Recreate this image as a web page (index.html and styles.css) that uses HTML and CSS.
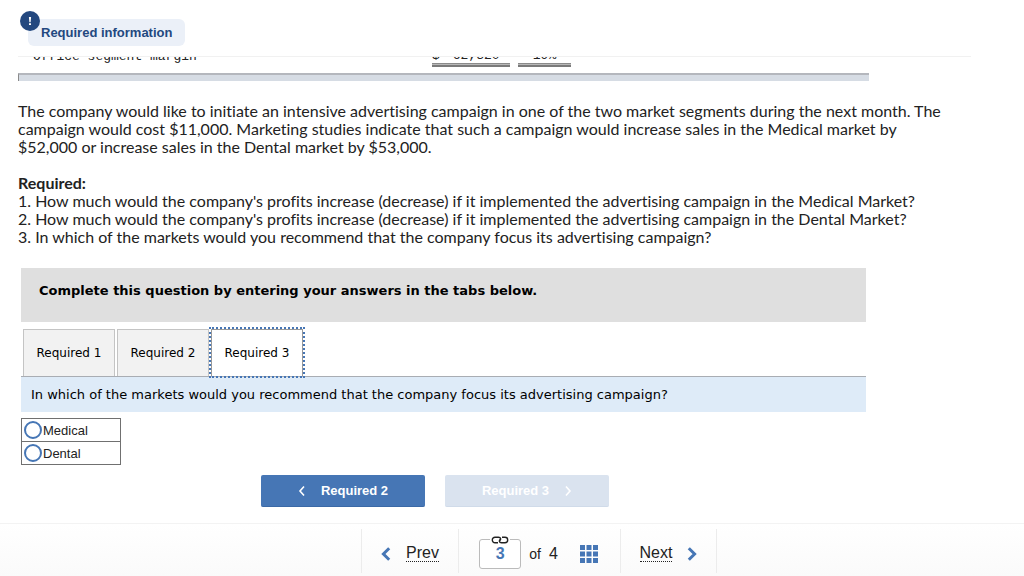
FILE: index.html
```
<!DOCTYPE html>
<html lang="en">
<head>
    <meta charset="UTF-8">
    <meta name="viewport" content="width=device-width, initial-scale=1.0">
    <title>Required information</title>
    <link rel="stylesheet" href="styles.css">
</head>
<body>

    <header class="info-header">
        <h1 class="info-tag">
            Required information
            <span class="info-badge">
                <svg width="20" height="20" viewBox="0 0 20 20" aria-hidden="true">
                    <circle cx="10" cy="10" r="10" fill="#23487f"/>
                    <path d="M8.9 6h2.2l-.5 5.2H9.4zM9 12.2h2v1.8H9z" fill="#fff"/>
                </svg>
            </span>
        </h1>
    </header>

    <main class="content">
        <div class="segment-wrap">
            <table class="segment-table">
                <tr>
                    <td class="segment-name">Office segment margin</td>
                    <td class="segment-amount"><span>$</span><span>62,320</span></td>
                    <td class="segment-percent">19%</td>
                    <td></td>
                </tr>
            </table>
            <div class="scroll-bar"></div>
        </div>

        <p class="question-text">
            The company would like to initiate an intensive advertising campaign in one of the two market segments during the next month. The<br>
            campaign would cost $11,000. Marketing studies indicate that such a campaign would increase sales in the Medical market by<br>
            $52,000 or increase sales in the Dental market by $53,000.
        </p>
        <p class="question-text">
            <b>Required:</b><br>
            1. How much would the company's profits increase (decrease) if it implemented the advertising campaign in the Medical Market?<br>
            2. How much would the company's profits increase (decrease) if it implemented the advertising campaign in the Dental Market?<br>
            3. In which of the markets would you recommend that the company focus its advertising campaign?
        </p>

        <section class="answer">
            <h2 class="answer-title">Complete this question by entering your answers in the tabs below.</h2>
            <div class="tabs">
                <button type="button" class="tab">Required 1</button>
                <button type="button" class="tab">Required 2</button>
                <button type="button" class="tab active">Required 3</button>
            </div>
            <p class="tab-question">In which of the markets would you recommend that the company focus its advertising campaign?</p>
            <div class="options">
                <label class="option"><input type="radio" name="market" value="medical">Medical</label>
                <label class="option"><input type="radio" name="market" value="dental">Dental</label>
            </div>
            <div class="step-buttons">
                <button type="button" class="step-btn">
                    <svg width="8" height="12" viewBox="0 0 8 12" aria-hidden="true"><path d="M6 1.5L2 6l4 4.5" fill="none" stroke="#fff" stroke-width="1.6"/></svg>
                    Required 2
                </button>
                <button type="button" class="step-btn" disabled>
                    Required 3
                    <svg width="8" height="12" viewBox="0 0 8 12" aria-hidden="true"><path d="M2 1.5L6 6l-4 4.5" fill="none" stroke="#fff" stroke-width="1.6"/></svg>
                </button>
            </div>
        </section>
    </main>

    <footer class="pager">
        <div class="pager-cell">
            <a href="#" class="pager-link">
                <svg width="10" height="14" viewBox="0 0 10 14" aria-hidden="true"><path d="M8.2 1.2L2.4 7l5.8 5.8" fill="none" stroke="#4676b5" stroke-width="3"/></svg>
                <span>Prev</span>
            </a>
        </div>
        <div class="pager-cell pager-pages">
            <div class="page-box">
                <input type="text" class="page-input" value="3" aria-label="Question number">
                <svg class="page-chain" width="20" height="8" viewBox="0 0 20 8" aria-hidden="true">
                    <path d="M0 0h20v8H0z" fill="#fff"/>
                    <path d="M8 6.700H5a2.700 2.700 0 0 1 0-5.400h3.500c2.500 0 2.500 2 1.500 3.400M12 1.300h3a2.700 2.700 0 0 1 0 5.400h-3.500c-2.500 0-2.500-2-1.500-3.400" fill="none" stroke="#222" stroke-width="1.400"/>
                </svg>
            </div>
            <span class="page-of">of</span>
            <span class="page-total">4</span>
            <button type="button" class="grid-btn" aria-label="All questions">
                <svg width="18" height="18" viewBox="0 0 18 18" aria-hidden="true">
                    <path d="M0 0h5v5H0zM6.500 0h5v5h-5zM13 0h5v5h-5zM0 6.500h5v5H0zM6.500 6.500h5v5h-5zM13 6.500h5v5h-5zM0 13h5v5H0zM6.500 13h5v5h-5zM13 13h5v5h-5z" fill="#4676b5"/>
                </svg>
            </button>
        </div>
        <div class="pager-cell pager-next">
            <a href="#" class="pager-link">
                <span>Next</span>
                <svg width="10" height="14" viewBox="0 0 10 14" aria-hidden="true"><path d="M1.800 1.200L7.600 7l-5.800 5.800" fill="none" stroke="#4676b5" stroke-width="3"/></svg>
            </a>
        </div>
    </footer>

</body>
</html>
```
FILE: styles.css
```
* {
    box-sizing: border-box;
}
body {
    margin: 0;
    height: 100vh;
    display: flex;
    flex-direction: column;
    overflow: hidden;
    background: #fff;
    color: #222;
    font-family: "Liberation Sans", Arial, sans-serif;
}
.info-header {
    flex: none;
    margin: 0 53px 0 18px;
    padding: 19px 0 10px 10px;
    border-bottom: 1px solid #f1f1f1;
}
.info-tag {
    position: relative;
    display: inline-block;
    vertical-align: top;
    margin: 0;
    padding: 0 13px;
    border-radius: 6px;
    background: #ebf0f8;
    color: #23487f;
    font-size: 13px;
    line-height: 27px;
}
.info-badge {
    position: absolute;
    top: -8px;
    left: -8px;
}
.info-badge svg {
    display: block;
}
.content {
    flex: 1;
    min-height: 0;
    overflow: hidden;
    padding: 0 18px;
}

/* last row of the scrolled segment table */
.segment-wrap {
    max-width: 851px;
    margin: -8px 0 21px;
}
.segment-table {
    width: 100%;
    border-collapse: separate;
    border-spacing: 8px 0;
    font-family: "Liberation Mono", monospace;
    font-size: 13px;
    line-height: 14px;
}
.segment-table td {
    padding: 0;
}
.segment-name {
    width: 398px;
}
.segment-table .segment-name {
    padding-left: 7px;
}
.segment-table .segment-amount,
.segment-table .segment-percent {
    border-bottom: 1px solid #8a8a8a;
    box-shadow: 0 1px #b8b8b8, 0 3px #7a7a7a;
}
.segment-amount {
    width: 78px;
}
.segment-amount span:last-child {
    margin-left: 13px;
}
.segment-percent {
    width: 53px;
    text-align: center;
}
.scroll-bar {
    height: 8px;
    margin-top: 9px;
    border-top: 2px solid #b4b7bd;
    border-left: 1px solid #8a8a8a;
    background: #d6dce4;
}
.question-text {
    margin: 0 0 18px;
    font-family: Lato, sans-serif;
    font-size: 16px;
    font-variant-ligatures: none;
    line-height: 18px;
    white-space: nowrap;
}
.answer {
    max-width: 845px;
    margin: 22px 3px 0;
    color: #000;
    font-family: "DejaVu Sans", Verdana, sans-serif;
    font-size: 13px;
}
.answer-title {
    margin: 0 0 7px;
    padding: 14px 18px 22px;
    background: #dfdfdf;
    font-size: 13px;
    line-height: 18px;
}
.tabs {
    display: flex;
    gap: 2px;
    padding-left: 2px;
    border-bottom: 1px solid #a9adb3;
}
.tab {
    width: 92px;
    height: 47px;
    padding: 0;
    border: 1px solid #c4c4c4;
    border-bottom: none;
    background: #f2f2f2;
    color: #000;
    font-family: inherit;
    font-size: 12px;
}
.tab.active {
    border-color: #999;
    background: #fff;
    outline: 2px dotted #4676b5;
}
.tab-question {
    margin: 0 0 6px;
    padding: 9px 10px;
    background: #deebf8;
    font-size: 13px;
    line-height: 17px;
}
.options {
    width: 100px;
    border: 1px solid #707070;
}
.option {
    display: flex;
    align-items: center;
    gap: 1px;
    height: 22px;
    padding-left: 2px;
    color: #222;
    font-family: "Liberation Sans", Arial, sans-serif;
    font-size: 13px;
}
.option + .option {
    height: 23px;
    border-top: 1px solid #707070;
}
.option input {
    appearance: none;
    width: 18px;
    height: 18px;
    margin: 0;
    border: 2px solid #4676b5;
    border-radius: 50%;
    background: #fff;
}
.step-buttons {
    display: flex;
    gap: 20px;
    margin-top: 10px;
    padding-left: 240px;
}
.step-btn {
    display: flex;
    align-items: center;
    justify-content: center;
    gap: 15px;
    width: 164px;
    height: 32px;
    padding: 0;
    border: none;
    border-bottom: 1px solid #3b69a6;
    border-radius: 2px;
    background: #4676b5;
    color: #fff;
    font-family: "Liberation Sans", Arial, sans-serif;
    font-size: 13px;
    font-weight: bold;
}
.step-btn:disabled {
    border-color: #d0dbe9;
    background: #dae3ef;
}
.pager {
    flex: none;
    display: flex;
    justify-content: center;
    height: 53px;
    padding: 5px 0 3px 54px;
    border-top: 1px solid #f3f3f3;
    background: linear-gradient(#fff, #fafafa);
}
.pager-cell {
    display: flex;
    align-items: center;
    justify-content: center;
    width: 97px;
    padding-top: 5px;
    border-left: 1px solid #ececec;
}
.pager-pages {
    width: 162px;
    padding-right: 2px;
}
.pager-next {
    border-right: 1px solid #ececec;
}
.pager-link {
    display: flex;
    align-items: center;
    gap: 15px;
    color: #222;
    font-size: 16px;
    line-height: 16px;
    text-decoration: none;
}
.pager-link span {
    border-bottom: 1px dotted #222;
}
.page-box {
    position: relative;
}
.page-input {
    display: block;
    width: 42px;
    height: 30px;
    padding: 0;
    border: 1px solid #bbb;
    border-radius: 3px;
    background: #fff;
    color: #4676b5;
    font-family: inherit;
    font-size: 16px;
    font-weight: bold;
    text-align: center;
}
.page-chain {
    position: absolute;
    top: -3px;
    left: 11px;
}
.page-of {
    margin: 0 8px;
    font-size: 14px;
}
.page-total {
    font-size: 16px;
}
.grid-btn {
    margin-left: 22px;
    padding: 0;
    border: none;
    background: none;
}
.grid-btn svg {
    display: block;
}
```
